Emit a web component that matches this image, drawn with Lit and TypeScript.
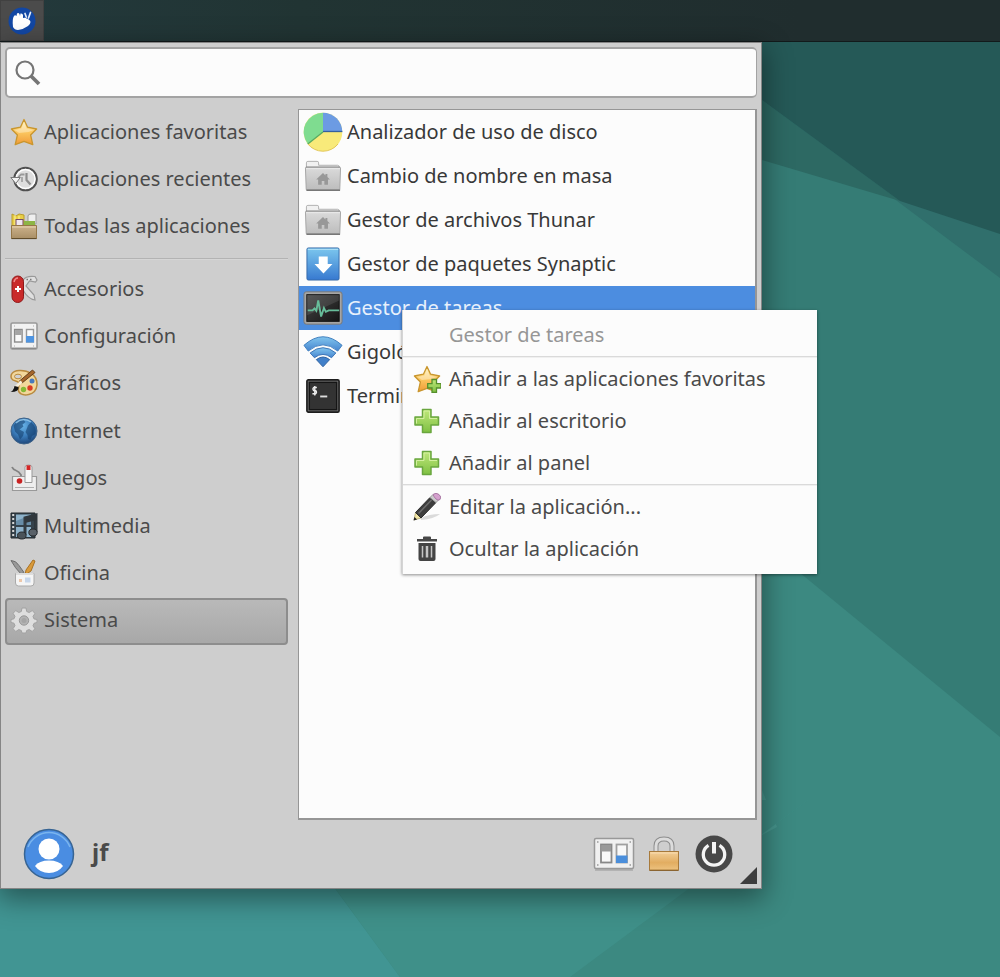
import { LitElement, html, css, svg } from "lit";
import { customElement } from "lit/decorators.js";

const star = svg`<path d="M14 1.500 17.600 9.200 26.600 11 20.600 17 22.800 26.700 14 23.400 5.200 26.700 7.400 17 1.400 11 10.400 9.200Z" fill="url(#gold)" stroke="#c9962e" stroke-width="1.300" stroke-linejoin="round"/><path d="M14 4 16.600 10.400 23.500 12 18.600 14 9 15 4.700 12 11.400 10.400Z" fill="#fff" opacity=".35"/>`;

const settings = svg`<rect x="1" y="1" width="26" height="26" rx="1.5" fill="#f2f2f2" stroke="#999" stroke-width="1.6"/><path d="M2 26.300h24" stroke="#8a8a8a" stroke-width="1.500"/><rect x="4.600" y="7.500" width="7.500" height="12.500" fill="#fafafa" stroke="#8b8b8b" stroke-width="1.400"/><rect x="5.100" y="8" width="6.500" height="5" fill="#a5a5a5"/><rect x="16.500" y="7.500" width="7" height="12.500" fill="#fafafa" stroke="#9a9a9a" stroke-width="1.400"/><rect x="16" y="14" width="8" height="6.500" fill="#4f94e0"/><path d="M4 4h1M23 4h1M4 24h1M23 24h1" stroke="#aaa"/>`;

const folder = svg`<path d="M3.500 9V3.500q0-1.500 1.500-1.500h9.500q1.500 0 1.500 1.500V6h19.500q1.500 0 1.500 1.500V12H3.500Z" fill="#f1f1f1" stroke="#b0b0b0"/><path d="M2.500 8.500h36l-.8 22.500H3.300Z" fill="url(#grey)" stroke="#a5a5a5"/><path d="M3 9.500h35" stroke="#eee"/><path d="M3.500 31.700h34.500" stroke="#777" stroke-width="1.600"/><path d="M3 7.700h35" stroke="#8f8f8f"/><path d="m20.500 14-7 6.500h2V26h3.700v-4h2.700v4h3.700v-5.500h2l-2.600-2.500v-3h-2v1.400Z" fill="#989898"/>`;

const plus = svg`<path d="M9.500 2.500h8.500v7.500h7.500v8H18v7.500H9.500V18H2v-8h7.500Z" fill="url(#green)" stroke="#6aa63f" stroke-width="1.500" stroke-linejoin="round"/><path d="M3.500 16.500v-5H11V4h5.500v7.500H24" fill="none" stroke="#d3f09f" stroke-width="1"/>`;

const defs = svg`<defs>
  <linearGradient id="gold" x2="0" y2="1"><stop offset="0" stop-color="#fdf0b4"/><stop offset=".5" stop-color="#fbc75f"/><stop offset="1" stop-color="#f09a37"/></linearGradient>
  <linearGradient id="grey" x2="0" y2="1"><stop offset="0" stop-color="#dadada"/><stop offset="1" stop-color="#bdbdbd"/></linearGradient>
  <linearGradient id="green" x2="0" y2="1"><stop offset="0" stop-color="#bfe87a"/><stop offset="1" stop-color="#7fc043"/></linearGradient>
  <linearGradient id="sky" x2="0" y2="1"><stop offset="0" stop-color="#7cc7ee"/><stop offset="1" stop-color="#3779d0"/></linearGradient>
  <linearGradient id="wave" x2="0" y2="1"><stop offset="0" stop-color="#82c6ee"/><stop offset="1" stop-color="#4584cf"/></linearGradient>
  <linearGradient id="tan" x2="0" y2="1"><stop offset="0" stop-color="#cdb38c"/><stop offset="1" stop-color="#a98f66"/></linearGradient>
  <linearGradient id="brass" x2="0" y2="1"><stop offset="0" stop-color="#f2cf99"/><stop offset=".6" stop-color="#e2ad61"/><stop offset="1" stop-color="#edc27f"/></linearGradient>
  <linearGradient id="dark" x2="1" y2="1"><stop offset="0" stop-color="#454545"/><stop offset="1" stop-color="#151515"/></linearGradient>
  <radialGradient id="earth" cx=".45" cy=".3" r=".75"><stop offset="0" stop-color="#69b4e8"/><stop offset=".55" stop-color="#397ab8"/><stop offset="1" stop-color="#1b3f70"/></radialGradient>
</defs>`;

const art: Record<string, { box: string; body: unknown }> = {
  star: { box: "0 0 28 28", body: star },
  recent: { box: "0 0 28 28", body: svg`<circle cx="15.500" cy="14" r="11.300" fill="#dedede" stroke="#505050" stroke-width="2"/><circle cx="15.500" cy="14" r="9.500" fill="none" stroke="#fff" stroke-width="1.300"/><path d="M16.500 8v7l4 4.500" fill="none" stroke="#8d8d8d" stroke-width="2.200"/><path d="M14.500 9.500H11q-2.500 1.500-3 5" fill="none" stroke="#999" stroke-width="1.800"/><path d="M12 12v5" stroke="#999" stroke-width="1.500"/><path d="M.8 12.500h9.500L5.800 18.500Z" fill="#f4f4f4" stroke="#777"/>` },
  all: { box: "0 0 28 28", body: svg`<path d="M2 15V2l4 2 3-2 5 1v12Z" fill="#e8ce46" stroke="#b99c2c"/><path d="M5 3v10M9 4v9" stroke="#fff4a0"/><path d="M18 4q0-2 3-2h5v10h-8Z" fill="#efefef" stroke="#999"/><rect x="6" y="7.500" width="7" height="7" fill="#f0e7ef" stroke="#744a6a"/><path d="M14 9h11v6H14Z" fill="#8db545"/><path d="M1.500 13.500h25v13h-25Z" fill="url(#tan)" stroke="#957747"/><path d="M2 15h24" stroke="#ecd6b2"/><path d="M1.500 26.600h25" stroke="#5c4929"/>` },
  accessories: { box: "0 0 28 28", body: svg`<path d="M13 5q3-4.500 12-3.500l2 3.500-1.500 2-6-1-3.500 5 8 9 1 5q-7-1-12-10Z" fill="#dfdfdf" stroke="#999" stroke-width="1.200"/><path d="M16.500 4.500H23" stroke="#777" stroke-width="1.500" stroke-dasharray="1.500 2"/><rect x="2" y="1" width="11.500" height="26.500" rx="5.700" fill="#c92a2a" stroke="#8f1818"/><path d="M4 7q1-4 4-4" fill="none" stroke="#ef8c8c" stroke-width="1.500"/><path d="M8 11v6M5 14h6" stroke="#fff" stroke-width="2"/>` },
  settings: { box: "0 0 28 28", body: settings },
  graphics: { box: "0 0 28 28", body: svg`<path d="M9 1.500C2 2 0 6 1.500 9.500 3 13 8 11 9 14c1 3-2 5 0 9 3 5 17 4 18-7C27.500 5 17 1 9 1.500Z" fill="#f2d79b" stroke="#b98a3e" stroke-width="1.500"/><ellipse cx="8" cy="7.500" rx="3.500" ry="2.300" fill="#d0d0d0" stroke="#b98a3e"/><circle cx="22" cy="12" r="2.500" fill="#4979bd"/><circle cx="20" cy="19" r="2.700" fill="#dc3b24"/><circle cx="13.500" cy="20.500" r="2.700" fill="#86b936"/><path d="M22.500 1 25 3.500 12 14l-2.500-2Z" fill="#a5662c" stroke="#66401b"/><path d="M11.500 12.500 4 20" stroke="#f7eedb" stroke-width="2.500"/><path d="M.5 23q3-1 4-6l4 1q1 5-8 5Z" fill="#151515"/>` },
  internet: { box: "0 0 28 28", body: svg`<circle cx="14" cy="14" r="13" fill="url(#earth)" stroke="#3d6288"/><path d="M3.500 8.500q4-5.500 10-5.500l2 2-3 2.500 1 2-4 3 4.500 2.500-1 4-3 3.500-2-5-3-3ZM18 8.500l3-3.500q6 5 4.500 12l-3.500 2-1.500 4-2.500-1-.500-4-2-3Z" fill="#16416f" opacity=".6"/><path d="M6 6q7-6 15-1" fill="none" stroke="#abd8f4" stroke-width="1.200" opacity=".7"/>` },
  games: { box: "0 0 28 28", body: svg`<path d="M2 3q1 2.500 4 3.500t5 4.500V14" fill="none" stroke="#828282" stroke-width="1.800"/><path d="M2.500 12.500h24v14h-24Z" fill="#eee" stroke="#999" stroke-width="1.200"/><path d="M5 23.500h19" stroke="#b0b0b0"/><circle cx="9.500" cy="17" r="2.800" fill="#c92222"/><path d="M15 18.500V3q0-2 3.500-2T22 3v15.500Z" fill="#f8f8f8" stroke="#999"/><path d="M16.500 1.300h4V6h-4Z" fill="#d32525"/>` },
  multimedia: { box: "0 0 28 28", body: svg`<path d="M1 1h24v25H1Z" fill="#35424b" stroke="#22282c"/><path d="M6 2.500h15V13H6ZM6 15h15v10H6Z" fill="#8db2ca"/><path d="M6 9 21 3v10H6Z" fill="#688da7"/><path d="M3.200 2v24" stroke="#d6d6d6" stroke-width="2" stroke-dasharray="2 2"/><path d="M15 23V6l11-3v17" fill="none" stroke="#333b40" stroke-width="3"/><path d="M15 5 27 2v6L15 11Z" fill="#30373c"/><ellipse cx="11.800" cy="23.500" rx="4.300" ry="3.500" fill="#4a5359" stroke="#262b2f"/><ellipse cx="23" cy="20.500" rx="4.200" ry="3.500" fill="#596168" stroke="#262b2f"/>` },
  office: { box: "0 0 28 28", body: svg`<path d="M1 1.500q5 0 8 5l5 7-3 1.500Q5 9 1 1.500Z" fill="#999" stroke="#6e6e6e"/><path d="m23 1 2 1-4 10-6 4 1-5Z" fill="#d99a3b" stroke="#a97223"/><path d="M5.500 14.500h18.500V24q0 3-3 3H8.500q-3 0-3-3Z" fill="#f5f5f5" stroke="#aaa"/><path d="M6 15h17.500" stroke="#ddd" stroke-width="2"/><path d="M15 18.500h5.500v5H15Z" fill="#c7d6ea"/><path d="M9 21.500h3" stroke="#edc7aa" stroke-width="3"/>` },
  system: { box: "0 0 28 28", body: svg`<path d="M12 2h4l.7 3.500 2.500 1L22.200 4.600 25 7.400l-2 3 1 2.500 3 .6v3l-3 .8-1 2.500 1.900 3-2.700 2.700-3-2-2.500 1L16 27h-4l-.7-2.500-2.500-1-3 2L3 22.700l2-3-1-2.500-3-.7v-3l3-.7 1-2.500-2-3L5.800 4.600l3 1.900 2.500-1Z" fill="#dedede" stroke="#a2a2a2"/><circle cx="14" cy="14.500" r="4.700" fill="#b3b3b3" stroke="#989898"/><circle cx="14" cy="14.500" r="2.500" fill="#a5a5a5"/>` },
  disk: { box: "0 0 40 40", body: svg`<circle cx="20" cy="20" r="19.300" fill="#f8ea7a"/><path d="M20 20V.7a19.300 19.300 0 0 1 19.300 19.300Z" fill="#6c9be3"/><path d="M20 20V.7A19.300 19.300 0 0 0 4.800 31.900Z" fill="#7fdc90"/><path d="M20 19.500h19.300" stroke="#34609e" stroke-width="1.300"/><path d="M20 20 4.800 31.900" stroke="#59aa61" stroke-width="1.300"/><path d="M4.800 31.900A19.300 19.300 0 0 0 35 32" fill="none" stroke="#e3c75a"/>` },
  folder: { box: "0 0 41 34", body: folder },
  synaptic: { box: "0 0 36 36", body: svg`<rect x="1" y="1" width="34" height="34" rx="1.500" fill="url(#sky)" stroke="#3569a8"/><path d="M2 2.500h32" stroke="#b8e4f8"/><path d="M13.500 10h9.500v8h5L18.500 28 9 18h4.500Z" fill="#fff"/>` },
  tasks: { box: "0 0 42 36", body: svg`<rect x="1" y="1" width="40" height="34" rx="2.500" fill="#a5a5a5" stroke="#777"/><rect x="4" y="4" width="34" height="28" fill="url(#dark)" stroke="#111"/><path d="M4 4h34v6L4 26Z" fill="#fff" opacity=".1"/><path d="M5 20.500h5l2-2 2 2.500 2-11 3 17 3-9 2 4 3-1.500h11" fill="none" stroke="#67bd9a" stroke-width="2"/>` },
  wifi: { box: "0 0 42 34", body: svg`<path d="M1 10Q21-8 41 10l-4.500 6Q21 3 5.500 16Z" fill="url(#wave)" stroke="#3d7cbd" stroke-linejoin="round"/><path d="M7.500 18q13.500-11 27 0L30 23q-9-7-18 0Z" fill="url(#wave)" stroke="#3a73b5" stroke-linejoin="round"/><path d="M14 25q7-5.500 14 0L21 32.500Z" fill="#4180c9" stroke="#2a5f9f" stroke-linejoin="round"/>` },
  terminal: { box: "0 0 36 36", body: svg`<rect x="1" y="1" width="34" height="34" rx="1.500" fill="#777" stroke="#1d1d1d" stroke-width="1.800"/><rect x="3.500" y="3.500" width="29" height="29" fill="#333" stroke="#151515" stroke-width="1.500"/><path d="M11.500 9H8.200q-1.700 1.700 0 3.300h2q1.800 1.700 0 3.400H6.800M9.300 7.500v10" fill="none" stroke="#eee" stroke-width="1.500"/><path d="M15 18.500h7.500" stroke="#ddd" stroke-width="2"/>` },
  starAdd: { box: "0 0 28 28", body: svg`${star}<path d="M19 14.500h4.500v4.200H28V23h-4.500v4.300H19V23h-4.300v-4.300H19Z" fill="url(#green)" stroke="#568f2c" stroke-width="1.300"/>` },
  plus: { box: "0 0 28 28", body: plus },
  pencil: { box: "0 0 28 28", body: svg`<path d="M8 25q8-4 19-4-6 5-19 6Z" fill="#ccc" opacity=".7"/><path d="M1 27 2.500 19.500 8 25Z" fill="#f2e6a5" stroke="#a99c62" stroke-width=".7"/><path d="M.5 27.500 1.500 24 4 26.500Z" fill="#222"/><path d="M2.500 19.500 17 4.500l6 5L8 25Z" fill="#3d3d3d" stroke="#2b2b2b"/><path d="M5.500 20.500 18.500 7" stroke="#6c6c6c" stroke-width="1.500"/><path d="m17 4.500 3-3 6 5-3 3Z" fill="#ccc" stroke="#999"/><path d="M20 1.500q3-2.500 6 0t1 5Q25 8 23 6T20 1.500Z" fill="#d5a1ce" stroke="#ab7ba6"/>` },
  trash: { box: "0 0 28 28", body: svg`<path d="M10 4V2.500q0-1 1-1h6q1 0 1 1V4h6v2.500H4V4Z" fill="#484848"/><path d="M5.500 8h17v16q0 2-2 2h-13q-2 0-2-2Z" fill="#444"/><path d="M9.500 11v11.500M18.500 11v11.500" stroke="#c5c5c5" stroke-width="1.500"/><path d="M14 11v11.500" stroke="#c5c5c5" stroke-width="2.500"/>` },
  user: { box: "0 0 52 52", body: svg`<circle cx="26" cy="26" r="24.500" fill="#4a8de2" stroke="#376493" stroke-width="1.500"/><path d="M5 19a22.500 22.500 0 0 1 42 0" fill="none" stroke="#79b4ee" stroke-width="1.500"/><circle cx="26" cy="21" r="10.500" fill="#fff"/><path d="M12 38q4-5.500 14-5.500T40 38Q35 45 26 45T12 38Z" fill="#fff"/>` },
  settingsWide: { box: "0 0 42 34", body: svg`<rect x="1.500" y="1.500" width="39" height="30" rx="1.500" fill="#f0f0f0" stroke="#999" stroke-width="1.500"/><path d="M2 33h38" stroke="#777" opacity=".6"/><rect x="8" y="7.500" width="10.500" height="18" fill="#f8f8f8" stroke="#888" stroke-width="1.800"/><path d="M8.500 8h9.500v6.500H8.500Z" fill="#999"/><rect x="23.500" y="7.500" width="10.500" height="18" fill="#f8f8f8" stroke="#a0a0a0" stroke-width="1.800"/><path d="M23 18.500h11.500v7.500H23Z" fill="#4a8edb"/><path d="M4 5h1.500M36.500 5H38M4 28h1.500M36.500 28H38" stroke="#999" stroke-width="1.300"/>` },
  lock: { box: "0 0 32 36", body: svg`<path d="M8 16V10Q8 3 16 3t8 7v6" fill="none" stroke="#8d8d8d" stroke-width="5"/><path d="M8 16V10Q8 3 16 3t8 7v6" fill="none" stroke="#dcdcdc" stroke-width="3"/><rect x="1.500" y="15.500" width="29" height="18.500" fill="url(#brass)" stroke="#a87a3b"/><path d="M2.500 17h27" stroke="#f9dcb0"/><path d="M1.500 34.500h29" stroke="#8b6531"/>` },
  power: { box: "0 0 38 38", body: svg`<circle cx="19" cy="19" r="18.500" fill="#484848"/><path d="M13.500 10.300a10.700 10.700 0 1 0 11 0" fill="none" stroke="#f4f4f4" stroke-width="3.300"/><path d="M19 7v11.500" stroke="#f4f4f4" stroke-width="4"/>` },
  search: { box: "0 0 26 26", body: svg`<circle cx="10" cy="10" r="8.500" fill="none" stroke="#757575" stroke-width="2.200"/><path d="m16 16 8 8" stroke="#757575" stroke-width="3.800"/>` },
  mouse: { box: "0 0 28 28", body: svg`<circle cx="14" cy="14" r="13.500" fill="#1247a4"/><path d="M5 20Q4 12 6 9q1-1.500 2.500 0L9 6.500q1.500-1 2.500.5l.5 2 .500-2.500q2-.5 2.500 1.500v3q3-.5 3.500.5 3.500 1 4 3.500 0 2-2.500 4-4 3-10 4-3.500 0-5-3Z" fill="#fff"/><path d="m17 6.500 1.300 3.500M22.500 5.500 20.500 11" stroke="#e3ecf8" stroke-width="1.700" stroke-linecap="round"/>` },
};

const icon = (name: string, cls: string) =>
  html`<svg class="icon ${cls}" viewBox=${art[name].box} aria-hidden="true">${defs}${art[name].body}</svg>`;

const quick = [["star", "Aplicaciones favoritas"], ["recent", "Aplicaciones recientes"], ["all", "Todas las aplicaciones"]];
const categories = [
  ["accessories", "Accesorios"], ["settings", "Configuración"], ["graphics", "Gráficos"], ["internet", "Internet"],
  ["games", "Juegos"], ["multimedia", "Multimedia"], ["office", "Oficina"], ["system", "Sistema"],
];
const apps = [
  ["disk", "Analizador de uso de disco"], ["folder", "Cambio de nombre en masa"], ["folder", "Gestor de archivos Thunar"],
  ["synaptic", "Gestor de paquetes Synaptic"], ["tasks", "Gestor de tareas"], ["wifi", "Gigoló"], ["terminal", "Terminal"],
];

@customElement("app-root")
export class AppRoot extends LitElement {
  static styles = css`
    :host { display: block; position: relative; min-height: 100vh; overflow: hidden; box-sizing: border-box;
      font-family: "Noto Sans", "Open Sans", sans-serif; font-size: 20px; line-height: 28px; color: #4a4a4a; background: #3d8c84; }
    *, *::before, *::after { box-sizing: border-box; }
    button, input { font: inherit; color: inherit; margin: 0; }
    button { border: 0; background: none; text-align: left; white-space: nowrap; }
    .icon { display: block; flex: none; }
    .wallpaper { position: absolute; inset: 0; width: 100%; height: 100%; }
    .panel { position: relative; display: flex; height: 42px; border-bottom: 1px solid #121a1b;
      background: linear-gradient(90deg, #23393c, #213433 30%, #202d2e 80%); }
    .launcher { display: grid; place-items: center; width: 44px; padding: 0; background: #4b4b4b; border: 1px solid #414141; }
    .i28 { width: 28px; height: 28px; }
    .window { position: relative; width: 762px; max-width: 100%; padding: 4px 4px 8px; background: #cecece; border: 1px solid #858585;
      box-shadow: 0 8px 26px 2px rgba(0, 0, 0, .42); }
    .search { display: flex; align-items: center; gap: 8px; height: 51px; padding: 0 8px; background: #fcfcfc;
      border: 2px solid #a3a3a3; border-right-width: 1px; border-radius: 5px; }
    .i26 { width: 26px; height: 26px; }
    .search input { flex: 1; min-width: 0; border: 0; outline: 0; background: none; }
    .body { display: grid; grid-template-columns: 283px 1fr; gap: 10px; padding-top: 11px; }
    .group { display: grid; grid-auto-rows: 1fr; }
    .quick { min-height: 142px; }
    .cats { min-height: 379px; }
    .rule { margin: 7px 0 6px; border: 0; border-top: 1px solid #b3b3b3; border-bottom: 1px solid #d6d6d6; }
    .cat { display: flex; align-items: center; gap: 6px; padding: 0 4px 2px; border: 1px solid transparent; border-radius: 4px; }
    .on { border: 2px solid #8d8d8d; padding: 0 3px 2px; background: linear-gradient(#b9b9b9, #a8a8a8); }
    .list { margin: 0; padding: 0; list-style: none; min-height: 711px; background: #fcfcfc; border: 2px solid #969696; border-width: 1px 2px 2px 1px; }
    .app { display: flex; align-items: center; gap: 4px; width: 100%; height: 44px; padding: 0 4px; color: #383838; }
    .slot { display: grid; place-items: center; width: 40px; flex: none; }
    .i40 { width: 40px; height: 40px; }
    .i34 { width: 34px; height: 34px; }
    .picked { background: #4c8de0; color: #e8f1fc; }
    .foot { display: flex; align-items: center; gap: 8px; padding: 8px 22px 0 18px; }
    .user { display: flex; align-items: center; gap: 17px; margin-right: auto; padding: 0; font-weight: 700; font-size: 24px; line-height: 28px; }
    .user span { padding-bottom: 4px; }
    .i52 { width: 52px; height: 52px; }
    .action { display: grid; place-items: center; width: 42px; height: 42px; padding: 0; }
    .i42 { width: 42px; height: 42px; }
    .i38 { width: 38px; height: 38px; }
    .i36 { width: 36px; height: 36px; }
    .grip { position: absolute; right: 4px; bottom: 4px; width: 17px; height: 17px; background: #3d3d3d; clip-path: polygon(100% 0, 100% 100%, 0 100%); }
    .menu { position: absolute; left: 402px; top: 310px; width: 415px; padding: 4px 0; background: #fcfcfc; border-left: 1px solid #d5d5d5;
      box-shadow: 0 1px 3px rgba(0, 0, 0, .45); }
    .item { display: flex; align-items: center; gap: 8px; width: 100%; height: 42px; padding: 0 10px; }
    .item:disabled { color: #969696; padding-left: 46px; }
    .line { margin: 0; border: 0; border-top: 1px solid #dadada; border-bottom: 1px solid #f0f0f0; }
  `;

  render() {
    const cat = ([i, label]: string[]) => html`<button class="cat ${label === "Sistema" ? "on" : ""}">${icon(i, "i28")}<span>${label}</span></button>`;
    const item = (i: string, label: string) => html`<button class="item" role="menuitem">${icon(i, "i28")}<span>${label}</span></button>`;
    return html`
      <svg class="wallpaper" viewBox="0 0 1000 977" preserveAspectRatio="none" aria-hidden="true">
        <rect width="1000" height="977" fill="#3c8981"/>
        <path d="M0 0H1000V737L805 577 400 250 0 200Z" fill="#357c75"/>
        <path d="M762 100 1000 278V0H600Z" fill="#306f6c"/>
        <path d="M600 113 762 160 900 201 762 100 600 0Z" fill="#2d6963"/>
        <path d="M600 0 762 100 900 201 1000 234V0Z" fill="#255957"/>
        <path d="M762 790 777 827 762 835Z" fill="#46948c"/>
        <path d="M0 800H270L400 977H0Z" fill="#419593"/>
        <path d="M270 800H808L570 977H400L335 888Z" fill="#3f9089"/>
        <path d="M762 800V834L808 800Z" fill="#3c8981"/>
      </svg>
      <header class="panel"><button class="launcher" aria-label="Menú de aplicaciones">${icon("mouse", "i28")}</button></header>
      <main class="window">
        <label class="search">${icon("search", "i26")}<input type="text" aria-label="Buscar" /></label>
        <div class="body">
          <nav>
            <div class="group quick">${quick.map(cat)}</div>
            <hr class="rule" />
            <div class="group cats">${categories.map(cat)}</div>
          </nav>
          <ul class="list">
            ${apps.map(([i, label]) => html`<li><button class="app ${i === "tasks" ? "picked" : ""}"><span class="slot">${icon(i, ["synaptic", "terminal"].includes(i) ? "i34" : "i40")}</span><span>${label}</span></button></li>`)}
          </ul>
        </div>
        <footer class="foot">
          <button class="user">${icon("user", "i52")}<span>jf</span></button>
          <button class="action" aria-label="Configuración">${icon("settingsWide", "i42")}</button>
          <button class="action" aria-label="Bloquear">${icon("lock", "i36")}</button>
          <button class="action" aria-label="Apagar">${icon("power", "i38")}</button>
        </footer>
        <span class="grip"></span>
      </main>
      <div class="menu" role="menu">
        <button class="item" role="menuitem" disabled>Gestor de tareas</button>
        <hr class="line" />
        ${item("starAdd", "Añadir a las aplicaciones favoritas")}${item("plus", "Añadir al escritorio")}${item("plus", "Añadir al panel")}
        <hr class="line" />
        ${item("pencil", "Editar la aplicación...")}${item("trash", "Ocultar la aplicación")}
      </div>
    `;
  }
}
